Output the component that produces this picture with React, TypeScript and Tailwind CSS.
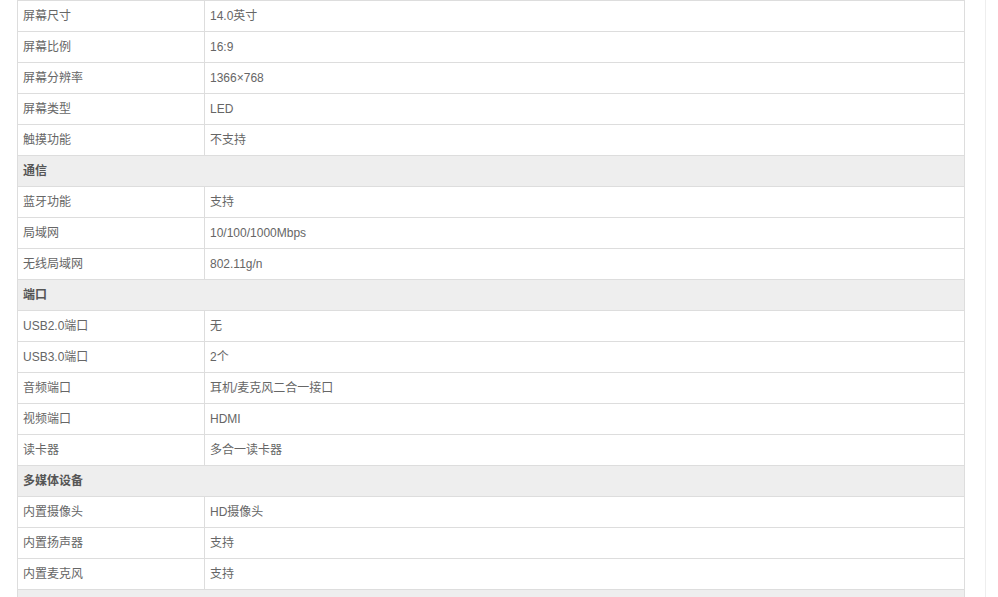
import React from 'react';

type Row = { group: string } | { label: string; value: string };

const rows: Row[] = [
  { label: '屏幕尺寸', value: '14.0英寸' },
  { label: '屏幕比例', value: '16:9' },
  { label: '屏幕分辨率', value: '1366×768' },
  { label: '屏幕类型', value: 'LED' },
  { label: '触摸功能', value: '不支持' },
  { group: '通信' },
  { label: '蓝牙功能', value: '支持' },
  { label: '局域网', value: '10/100/1000Mbps' },
  { label: '无线局域网', value: '802.11g/n' },
  { group: '端口' },
  { label: 'USB2.0端口', value: '无' },
  { label: 'USB3.0端口', value: '2个' },
  { label: '音频端口', value: '耳机/麦克风二合一接口' },
  { label: '视频端口', value: 'HDMI' },
  { label: '读卡器', value: '多合一读卡器' },
  { group: '多媒体设备' },
  { label: '内置摄像头', value: 'HD摄像头' },
  { label: '内置扬声器', value: '支持' },
  { label: '内置麦克风', value: '支持' },
  { group: '' },
];

const App: React.FC = () => {
  return (
    <div
      className="w-[998px] h-[597px] overflow-hidden bg-white flex text-[12px] text-[#666]"
      style={{ fontFamily: '"Liberation Sans", "Noto Sans CJK SC", sans-serif' }}
    >
      <div className="ml-[17px] w-[948px] shrink-0 border-t border-l border-r border-[#ddd] self-start">
        {rows.map((row, i) =>
          'group' in row ? (
            <div
              key={i}
              className="h-[31px] border-b border-[#ddd] bg-[#eeeeee] flex items-center pl-[5px] font-bold text-[#555]"
            >
              {row.group}
            </div>
          ) : (
            <div key={i} className="h-[31px] border-b border-[#ddd] grid grid-cols-[187px_1fr]">
              <div className="border-r border-[#ddd] flex items-center pl-[5px]">{row.label}</div>
              <div className="flex items-center pl-[5px]">{row.value}</div>
            </div>
          )
        )}
      </div>
      <div className="ml-[20px] w-px h-full bg-[#eeeeee]" />
    </div>
  );
};

export default App;
